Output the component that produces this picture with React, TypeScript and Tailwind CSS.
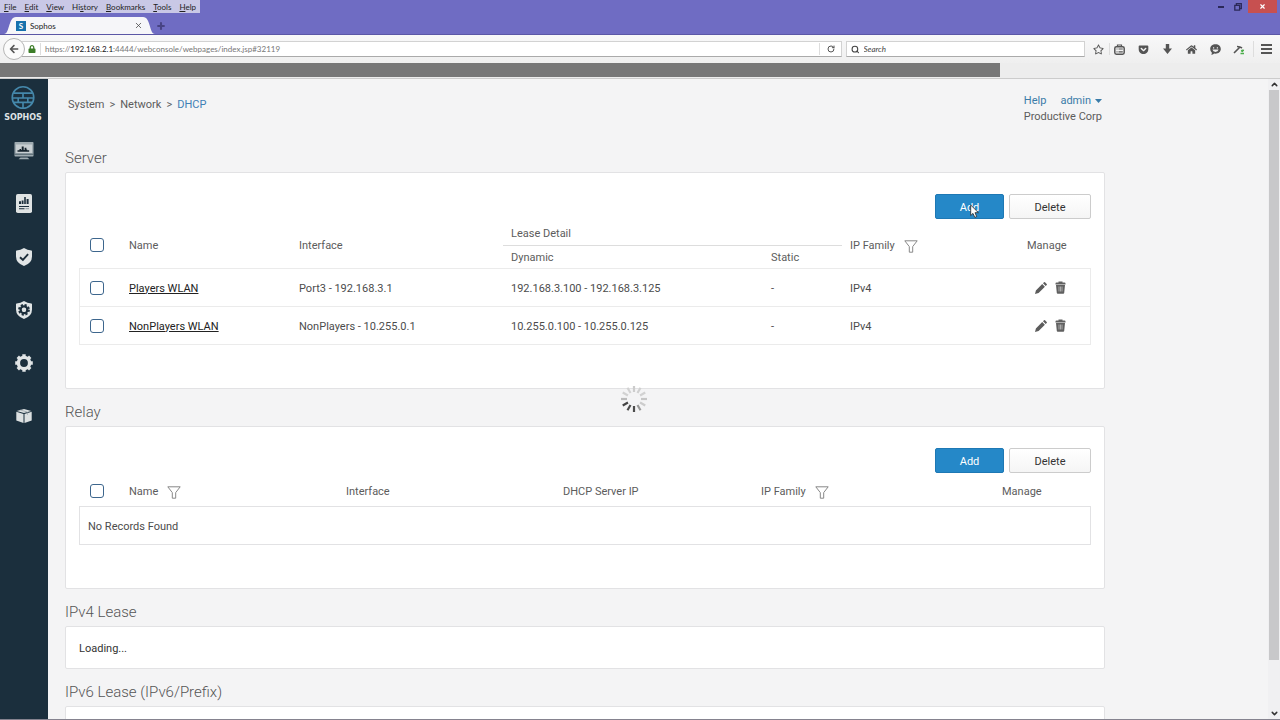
import React, { useState } from 'react';
import { FaArrowLeft, FaLock, FaHome, FaRegStar, FaGetPocket } from 'react-icons/fa';
import { Search, RotateCw, Plus, X, ChevronUp, ChevronDown } from 'lucide-react';

interface Lease {
  id: string;
  name: string;
  iface: string;
  dynamic: string;
  fixed: string;
  family: string;
}

const leases: Lease[] = [
  { id: 'players', name: 'Players WLAN', iface: 'Port3 - 192.168.3.1', dynamic: '192.168.3.100 - 192.168.3.125', fixed: '-', family: 'IPv4' },
  { id: 'nonplayers', name: 'NonPlayers WLAN', iface: 'NonPlayers - 10.255.0.1', dynamic: '10.255.0.100 - 10.255.0.125', fixed: '-', family: 'IPv4' },
];

// [before, access key, after]
const menus = [
  ['', 'F', 'ile'],
  ['', 'E', 'dit'],
  ['', 'V', 'iew'],
  ['Hi', 's', 'tory'],
  ['', 'B', 'ookmarks'],
  ['', 'T', 'ools'],
  ['', 'H', 'elp'],
];

/* ---------- icons ---------- */

const FunnelIcon = () => (
  <svg width="14" height="13" viewBox="0 0 14 13" fill="none" stroke="#888" strokeWidth="1">
    <path d="M.8 .8h12.4L8.7 6.6v5.6H5.3V6.6Z" />
  </svg>
);

const PencilIcon = () => (
  <svg width="12" height="12" viewBox="0 0 12 12" fill="#5c5c5c">
    <path d="M0 12l.9-3.6L7.2 2.1l2.7 2.7-6.3 6.3ZM8 1.3 9 .3q.5-.5 1 0L11.7 2q.5.5 0 1l-1 1Z" />
  </svg>
);

const TrashIcon = () => (
  <svg width="11" height="13" viewBox="0 0 11 13">
    <path d="M.5 2.4q0-.9 1-.9h2V.5h4v1h2q1 0 1 .9V3.4H.5ZM1 4h9l-.8 8q-.1.8-.9.8H2.7q-.8 0-.9-.8Z" fill="#606060" />
    <path d="M4 5.5v5M5.5 5.5v5M7 5.5v5" stroke="#ddd" strokeWidth=".6" />
  </svg>
);

const MonitorIcon = () => (
  <svg width="20" height="19" viewBox="0 0 20 19">
    <rect x=".5" y="1" width="19" height="14.5" rx=".8" fill="#9fabb1" />
    <rect x="2" y="3.5" width="16" height="8.5" fill="#c8cfd2" />
    <path d="M3.5 10.7V9.2h2V8h1.6v1h.6V5.5h2V9h.9V6.8h1.8v1.7h.8V9.2h2v1.5Z" fill="#15232d" />
    <path d="M.5 12.7h19v1H.5Z" fill="#4b5d68" />
    <path d="M6.5 16.5h7l2 1.8h-11Z" fill="#9fabb1" />
  </svg>
);

const ReportIcon = () => (
  <svg width="16" height="19" viewBox="0 0 16 19">
    <rect width="16" height="19" rx="1.8" fill="#dfe3e3" />
    <path d="M3 10V7.3h2V10ZM5.7 10V6.4h1.8V10ZM8.2 10V3h1.6v7ZM10.6 10V5h2v5ZM3 12h10v1H3ZM3 14.2h5.5v1H3Z" fill="#1c2e3b" />
    <path d="M9.5 14.2H13v1H9.5Z" fill="#8b979d" />
  </svg>
);

const ShieldCheckIcon = () => (
  <svg width="16" height="18" viewBox="0 0 16 18">
    <path d="M8 0q3.4 2.3 7.4 2.6.6 0 .6.7v5.2Q16 15.2 8 18 0 15.2 0 8.5V3.3q0-.7.6-.7Q4.6 2.3 8 0Z" fill="#e1e5e6" />
    <path d="m4 9.2 2.9 2.7L12.1 6.2" fill="none" stroke="#1c2e3b" strokeWidth="1.9" />
  </svg>
);

const ShieldGearIcon = () => (
  <svg width="16" height="18" viewBox="0 0 16 18">
    <path d="M8 0q3.4 2.3 7.4 2.6.6 0 .6.7v5.2Q16 15.2 8 18 0 15.2 0 8.5V3.3q0-.7.6-.7Q4.6 2.3 8 0Z" fill="#e1e5e6" />
    <circle cx="8" cy="8.8" r="3.3" fill="none" stroke="#1c2e3b" strokeWidth="2.4" />
    <circle cx="8" cy="8.8" r="5" fill="none" stroke="#1c2e3b" strokeWidth="1.8" strokeDasharray="2.2 1.727" />
    <circle cx="8" cy="8.8" r="2.2" fill="#dfe3e3" />
  </svg>
);

const GearIcon = () => (
  <svg width="18" height="18" viewBox="0 0 18 18" fill="none" stroke="#e1e5e6">
    <circle cx="9" cy="9" r="5.6" strokeWidth="3.4" />
    {[0, 45, 90, 135].map((a) => (
      <path key={a} d="M9 .2v2.8M9 15v2.8" strokeWidth="3.4" transform={`rotate(${a} 9 9)`} />
    ))}
  </svg>
);

const BoxIcon = () => (
  <svg width="16" height="14" viewBox="0 0 16 14">
    <path d="M8 0 15.3 1.9 8 4 .7 1.9ZM.3 2.8 7.5 4.9V14L.3 11.5ZM15.7 2.8 8.5 4.9V14l7.2-2.5Z" fill="#dce0e1" />
    <path d="m4 .9 7.5 2.2v2.7" stroke="#8b979d" strokeWidth=".6" fill="none" />
  </svg>
);

const Spinner = () => (
  <svg width="28" height="28" viewBox="0 0 28 28" strokeWidth="2.2">
    {['#ccc', '#d0d0d0', '#d2d2d2', '#c6c6c6', '#ccc', '#999', '#4c4c4c', '#4c4c4c', '#444', '#bbb', '#d2d2d2', '#d2d2d2'].map((c, i) => (
      <path key={i} d="M14 1v6" stroke={c} transform={`rotate(${i * 30} 14 14)`} />
    ))}
  </svg>
);

const SophosLogo = () => (
  <svg width="26" height="26" viewBox="0 0 26 26" fill="none" stroke="#4588ab" strokeWidth="1.7">
    <circle cx="13" cy="13" r="11.2" />
    <path d="M3 8.5h20M2 13.5h22M3 18h20M13 8.5v5M8 13.5V18M18 13.5V18M13 18v6" />
  </svg>
);

const LibraryIcon = () => (
  <svg width="11" height="11" viewBox="0 0 11 11" fill="none" stroke="#555">
    <path d="M3.5 2.5V1h4v1.5" strokeWidth="1.2" />
    <rect x=".8" y="2.7" width="9.4" height="7.5" rx="1.6" strokeWidth="1.5" />
    <path d="M2.5 5h1M4.5 5H8.8M2.5 7.8h1M4.5 7.8H8.8" strokeWidth="1.2" />
  </svg>
);

const DownloadIcon = () => (
  <svg width="9" height="10" viewBox="0 0 9 10" fill="#555">
    <path d="M2.8 0h3.4v4.5H9L4.5 10 0 4.5h2.8Z" />
  </svg>
);

const ChatIcon = () => (
  <svg width="11" height="11" viewBox="0 0 11 11">
    <path d="M5.5.3C8.6.3 10.8 2.3 10.8 5S8.6 9.7 5.5 9.7q-.7 0-1.3-.1Q3 10.8 1.2 10.8 1.9 9.9 1.9 8.7.2 7.4.2 5C.2 2.3 2.4.3 5.5.3Z" fill="#555" />
    <path d="M3 3.2h1.2v1.2H3ZM6.8 3.2H8v1.2H6.8ZM2.4 5.6h6.2Q8 8 5.5 8T2.4 5.6Z" fill="#eee" />
  </svg>
);

const navItems = [
  { label: 'Control center', icon: <MonitorIcon /> },
  { label: 'Reports', icon: <ReportIcon /> },
  { label: 'Policies', icon: <ShieldCheckIcon /> },
  { label: 'Protection', icon: <ShieldGearIcon /> },
  { label: 'System', icon: <GearIcon /> },
  { label: 'Objects', icon: <BoxIcon /> },
];

/* ---------- browser frame ---------- */

const TitleBar = () => (
  <div className="flex h-[35px] flex-col border-b border-[#5b57a6] bg-[#6f6cc3]">
    <div className="flex h-[13px] items-start justify-between">
      <div className="flex h-[13px] items-center gap-2 bg-[#c9c8e6] px-1 text-[8px] leading-[12px] text-[#222]">
        {menus.map(([pre, key, post]) => (
          <button key={post}>
            {pre}
            <span className="underline">{key}</span>
            {post}
          </button>
        ))}
      </div>
      <div className="flex items-center pr-[3px]">
        <button aria-label="Minimize" className="mr-[7px] flex h-[13px] w-2 items-center justify-center">
          <span className="h-[2px] w-[6px] bg-[#2b2859]" />
        </button>
        <button aria-label="Restore" className="mr-1 flex h-[13px] w-3 items-center justify-center">
          <svg width="8" height="8" viewBox="0 0 8 8" fill="none" stroke="#2b2859" strokeWidth="1.3">
            <path d="M.8 2.4h4.8v4.8H.8ZM2.4 2V.7h4.9v4.9H6" />
          </svg>
        </button>
        <button aria-label="Close" className="flex h-[13px] w-[29px] items-center justify-center bg-[#c75050] text-white">
          <X size={7} strokeWidth={4} />
        </button>
      </div>
    </div>
    <div className="flex flex-1 items-end pl-1 pt-1">
      <svg width="12" height="17" viewBox="0 0 12 17" fill="#f6f6f9">
        <path d="M0 17C6 17 4 0 12 0v17Z" />
      </svg>
      <div className="flex h-[17px] w-[127px] items-center bg-[#f6f6f9] text-[8px] text-[#222]">
        <span className="flex size-[10px] items-center justify-center bg-[#1671ad] text-[8px] leading-[10px] font-bold text-white">S</span>
        <span className="flex-1 pl-1">Sophos</span>
        <button aria-label="Close tab"><X size={9} color="#444" /></button>
      </div>
      <svg width="12" height="17" viewBox="0 0 12 17" fill="#f6f6f9">
        <path d="M12 17C6 17 8 0 0 0v17Z" />
      </svg>
      <button aria-label="New tab" className="flex h-[17px] w-3 items-center justify-center">
        <Plus size={10} strokeWidth={5} color="#474384" />
      </button>
    </div>
  </div>
);

const ToolButton = ({ label, children }: { label: string; children: React.ReactNode }) => (
  <button aria-label={label} className="flex h-4 w-6 items-center justify-center text-[#555]">
    {children}
  </button>
);

const AddressBar = () => (
  <div className="flex h-[28px] items-center bg-linear-to-b from-[#f8f8f9] to-[#efefef] text-[8px]">
    <div className="flex flex-1 items-center pl-[3px]">
      <button aria-label="Back" className="z-10 flex size-[22px] items-center justify-center rounded-full border border-[#b5b5b5] bg-[#fbfbfb] text-[#555]">
        <FaArrowLeft size={10} />
      </button>
      <div className="-ml-1 flex h-4 flex-1 items-center border border-[#d2d2d2] border-b-[#aaa] bg-white pl-[6px]">
        <FaLock size={8} color="#3c7d28" />
        <span className="mx-1 h-3 w-px bg-[#ddd]" />
        <div role="textbox" aria-label="Address" className="flex-1 text-[#777]">
          https://<span className="text-[#111]">192.168.2.1</span>:4444/webconsole/webpages/index.jsp#32119
        </div>
        <button aria-label="Reload" className="flex h-3 w-[22px] items-center justify-center border-l border-[#ddd]">
          <RotateCw size={8} strokeWidth={3} color="#555" />
        </button>
      </div>
    </div>
    <label className="ml-1 flex h-4 w-[239px] items-center gap-1 border border-[#d2d2d2] border-b-[#aaa] bg-white pl-1">
      <Search size={9} color="#444" strokeWidth={3} />
      <input type="search" aria-label="Search" placeholder="Search" className="w-full bg-transparent italic outline-none placeholder:text-[#444]" />
    </label>
    <div className="flex items-center pl-px pr-[2px]">
      <ToolButton label="Bookmark"><FaRegStar size={11} /></ToolButton>
      <span className="-mx-px h-3 w-px bg-[#ddd]" />
      <div className="-ml-[2px] flex">
        <ToolButton label="Library"><LibraryIcon /></ToolButton>
        <ToolButton label="Pocket"><FaGetPocket size={11} /></ToolButton>
        <ToolButton label="Downloads"><DownloadIcon /></ToolButton>
        <ToolButton label="Home"><FaHome size={11} /></ToolButton>
        <ToolButton label="Chat"><ChatIcon /></ToolButton>
        <ToolButton label="Extension">
          <svg width="12" height="11" viewBox="0 0 12 11" fill="none" strokeWidth="1.6">
            <path d="M1 9l6-6M4 2.5q3 0 5 1.500" stroke="#555" />
            <path d="M11 6.5c-3-.5-3 .8-1 1M7.5 9.5H11" stroke="#4cae4c" />
          </svg>
        </ToolButton>
      </div>
      <span className="ml-[2px] h-4 w-px bg-[#ddd]" />
      <ToolButton label="Menu">
        <svg width="11" height="10" viewBox="0 0 11 10" fill="#555"><path d="M0 0h11v2H0ZM0 4h11v2H0ZM0 8h11v2H0Z" /></svg>
      </ToolButton>
    </div>
  </div>
);

/* ---------- console ---------- */

const Sidebar = () => (
  <nav className="w-12 shrink-0 bg-[#1b2f3d]">
    <a href="#home" className="flex h-[45px] flex-col items-center gap-[2px] pr-[2px] pt-[6px]">
      <SophosLogo />
      <span className="font-['DejaVu_Sans',sans-serif] text-[8px] leading-3 font-bold text-[#dfe3e5]">SOPHOS</span>
    </a>
    {navItems.map((item) => (
      <a key={item.label} href="#nav" aria-label={item.label} className="flex h-[53px] items-center justify-center">
        {item.icon}
      </a>
    ))}
  </nav>
);

const Check = ({ label }: { label: string }) => (
  <input
    type="checkbox"
    aria-label={label}
    className="block size-[14px] appearance-none rounded-[3px] border border-[#3d668d] bg-white checked:bg-[#2385c7]"
  />
);

const Section = ({ title, children }: { title: string; children?: React.ReactNode }) => (
  <section>
    <h2 className="pt-[13px] pb-1 text-[15px] leading-5 font-light text-[#555]">{title}</h2>
    <div className="rounded-[2px] border border-[#e2e2e4] bg-white px-[13px]">{children}</div>
  </section>
);

const Actions = ({ pointer }: { pointer?: boolean }) => (
  <div className="flex justify-end gap-[5px] pt-[21px] pb-[3px]">
    <button className="relative h-[25px] w-[69px] rounded-[2px] border border-[#1e78b4] bg-[#2588c8] pt-[2px] text-white">
      Add
      {pointer && (
        <svg className="absolute top-[9px] left-[34px]" width="10" height="15" viewBox="0 0 10 15">
          <path d="M.7 1v10.5L3 9.4l1.8 4 1.9-.8L5 8.7h3.4Z" fill="#fff" stroke="#222" strokeWidth=".8" />
        </svg>
      )}
    </button>
    <button className="h-[25px] w-[82px] rounded-[2px] border border-[#ccc] bg-linear-to-b from-white to-[#f5f5f5] pt-[2px] text-[#333]">Delete</button>
  </div>
);

const ServerTable = () => (
  <table className="mb-[43px] w-full table-fixed border-separate border-spacing-0 text-left">
    <colgroup>
      <col className="w-[42px]" />
      <col className="w-[170px]" />
      <col className="w-[212px]" />
      <col />
      <col className="w-[79px]" />
      <col className="w-[177px]" />
      <col className="w-[72px]" />
    </colgroup>
    <thead className="text-[#5c5c5c]">
      <tr className="h-6 *:font-normal">
        <th rowSpan={2} className="border-b border-[#ebebeb] pl-[11px]"><Check label="Select all servers" /></th>
        <th rowSpan={2} className="border-b border-[#ebebeb] px-2 pt-[2px]">Name</th>
        <th rowSpan={2} className="border-b border-[#ebebeb] px-2 pt-[2px]">Interface</th>
        <th colSpan={2} className="border-b border-[#ddd] px-2">Lease Detail</th>
        <th rowSpan={2} className="border-b border-[#ebebeb] px-2 pt-[2px]">
          <span className="flex items-center gap-[9px]">IP Family <FunnelIcon /></span>
        </th>
        <th rowSpan={2} className="border-b border-[#ebebeb] px-2 pt-[2px]">Manage</th>
      </tr>
      <tr className="h-[23px] *:font-normal">
        <th className="border-b border-[#ebebeb] px-2 pt-[2px]">Dynamic</th>
        <th className="border-b border-[#ebebeb] px-2 pt-[2px]">Static</th>
      </tr>
    </thead>
    <tbody className="text-[#4c4c4c]">
      {leases.map((lease) => (
        <tr key={lease.id} className="h-[38px] *:border-b *:border-[#ebebeb]">
          <td className="border-l pl-[10px]"><Check label={lease.name} /></td>
          <td className="px-2 pt-[2px]"><a href="#server" className="text-[#222] underline">{lease.name}</a></td>
          <td className="px-2 pt-[2px]">{lease.iface}</td>
          <td className="px-2 pt-[2px]">{lease.dynamic}</td>
          <td className="px-2 pt-[2px]">{lease.fixed}</td>
          <td className="px-2 pt-[2px]">{lease.family}</td>
          <td className="border-r pl-4">
            <span className="flex items-center gap-2">
              <button aria-label={`Edit ${lease.name}`}><PencilIcon /></button>
              <button aria-label={`Delete ${lease.name}`}><TrashIcon /></button>
            </span>
          </td>
        </tr>
      ))}
    </tbody>
  </table>
);

const RelayTable = () => (
  <table className="mb-[43px] w-full table-fixed border-separate border-spacing-0 text-left">
    <colgroup>
      <col className="w-[42px]" />
      <col className="w-[217px]" />
      <col className="w-[217px]" />
      <col className="w-[198px]" />
      <col />
      <col className="w-[97px]" />
    </colgroup>
    <thead className="text-[#5c5c5c]">
      <tr className="h-[31px] *:border-b *:border-[#e2e2e4] *:font-normal">
        <th className="pl-[11px]"><Check label="Select all relays" /></th>
        <th className="px-2 pt-[2px]"><span className="flex items-center gap-[9px]">Name <FunnelIcon /></span></th>
        <th className="px-2 pt-[2px]">Interface</th>
        <th className="px-2 pt-[2px]">DHCP Server IP</th>
        <th className="px-2 pt-[2px]"><span className="flex items-center gap-[9px]">IP Family <FunnelIcon /></span></th>
        <th className="px-2 pt-[2px]">Manage</th>
      </tr>
    </thead>
    <tbody>
      <tr className="h-[38px]">
        <td colSpan={6} className="border-x border-b border-[#e2e2e4] px-2 pt-[2px] text-[#4c4c4c]">No Records Found</td>
      </tr>
    </tbody>
  </table>
);

const Scrollbar = () => (
  <div className="flex w-3 shrink-0 flex-col items-center bg-[#f0f0f2] text-[#333]">
    <ChevronUp size={9} strokeWidth={4} className="my-[1px] shrink-0" />
    <div className="w-[10px] grow-[12] bg-[#c8c8ca]" />
    <div className="grow" />
    <ChevronDown size={9} strokeWidth={4} className="my-[1px] shrink-0" />
  </div>
);

export default function App() {
  const [loading] = useState(true);

  return (
    <div className="flex h-screen flex-col overflow-hidden bg-[#f4f4f5] font-[Lato,'Open_Sans',sans-serif]">
      <TitleBar />
      <AddressBar />
      <div className="h-4 border-b border-[#ccc] bg-[#ededed]">
        <div className="h-[14px] w-25/32 bg-[#777]" />
      </div>

      <div className="relative flex min-h-0 flex-1 border-b border-[#85838f] font-[Roboto,'Liberation_Sans',sans-serif] text-[11px] leading-4">
        <Sidebar />
        <main className="min-w-0 flex-1 overflow-hidden pl-[17px]">
          <div className="w-full max-w-[1040px]">
            <header className="flex h-[56px] justify-between px-[3px] pt-[14px] text-[#5c5c5c]">
              <div className="flex gap-[5px] pt-1">
                <span>System</span>
                <span>&gt;</span>
                <span>Network</span>
                <span>&gt;</span>
                <a href="#dhcp" className="text-[#3f80b5]">DHCP</a>
              </div>
              <div className="text-right">
                <div className="flex justify-end gap-[14px] text-[#3a7ba8]">
                  <a href="#help">Help</a>
                  <button className="flex items-center gap-1">
                    admin
                    <svg width="7" height="4" viewBox="0 0 7 4" fill="#3a7ba8"><path d="M0 0h7L3.5 4Z" /></svg>
                  </button>
                </div>
                <div>Productive Corp</div>
              </div>
            </header>

            <Section title="Server">
              <Actions pointer />
              <ServerTable />
            </Section>
            <Section title="Relay">
              <Actions />
              <RelayTable />
            </Section>
            <Section title="IPv4 Lease">
              <p className="pt-[14px] pb-[11px] text-[#333]">Loading...</p>
            </Section>
            <Section title="IPv6 Lease (IPv6/Prefix)">
              <div className="h-10" />
            </Section>
          </div>
        </main>
        <Scrollbar />

        {loading && (
          <div className="pointer-events-none absolute inset-y-0 right-3 left-0 flex items-center justify-center">
            <Spinner />
          </div>
        )}
      </div>
    </div>
  );
}
